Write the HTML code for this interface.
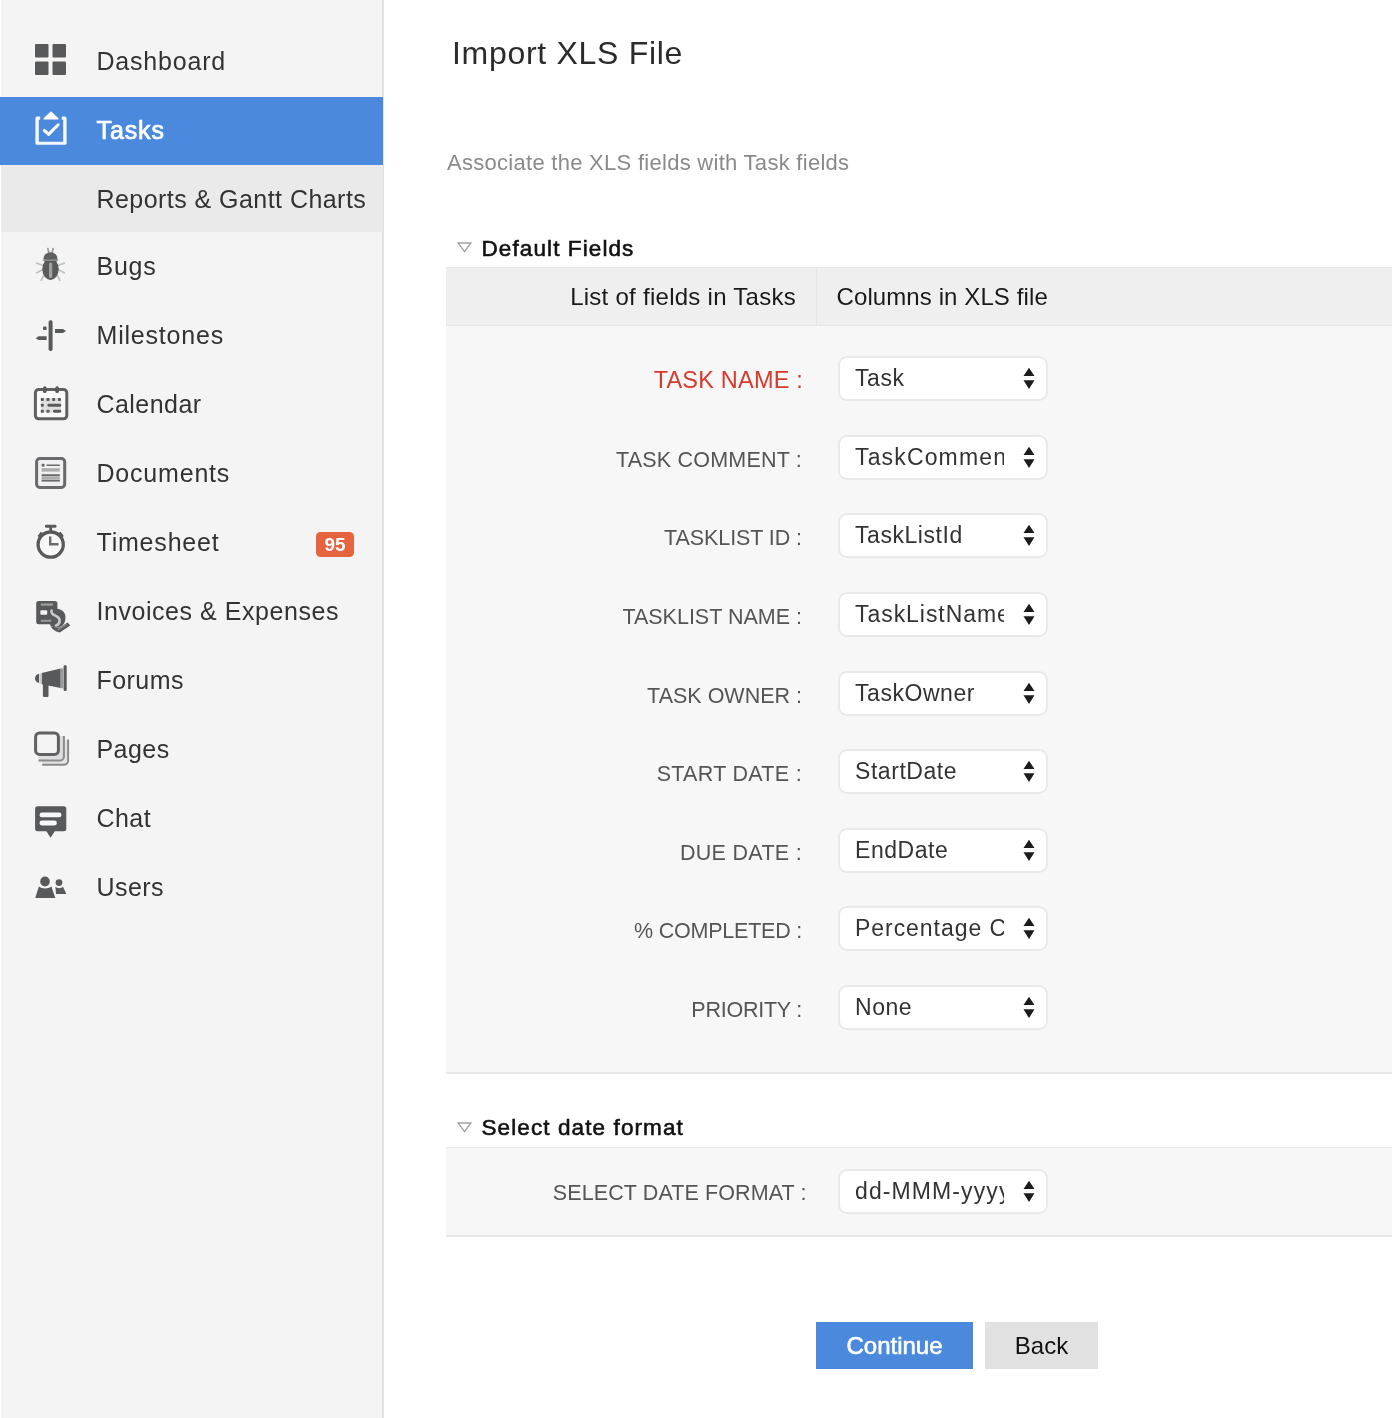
<!DOCTYPE html>
<html lang="en">
<head>
<meta charset="utf-8">
<title>Import XLS File</title>
<style>
*{box-sizing:border-box;margin:0;padding:0}
html,body{width:1392px;height:1418px;overflow:hidden;background:#fff}
body{position:relative;will-change:transform;font-family:"Liberation Sans",Arial,sans-serif;color:#333;-webkit-font-smoothing:antialiased}
.abs{position:absolute}
/* ---------- sidebar ---------- */
#side{position:absolute;left:0;top:0;width:384px;height:1418px;background:#f4f4f4;border-right:2px solid #e2e2e2;border-left:1px solid #fff}
.nav{position:absolute;left:0;width:382px;height:69px}
.nav .lbl{position:absolute;left:95.5px;top:0;height:69px;line-height:69px;font-size:25px;color:#333;white-space:nowrap;letter-spacing:.45px}
.nav svg{position:absolute}
#n-tasks{background:#4a89dc;left:-1px;width:383px}
#n-tasks .lbl{color:#fff;left:96.5px;-webkit-text-stroke:.7px #fff;letter-spacing:.9px}
#n-rep{background:#eaeaea}
.badge{position:absolute;left:315px;top:24px;width:38px;height:24.5px;border-radius:4.5px;background:#e5633f;color:#fff;font-size:19px;font-weight:bold;line-height:25px;text-align:center}
/* ---------- main ---------- */
#title{position:absolute;left:452px;top:30px;font-size:32px;line-height:46px;color:#2b2b2b;letter-spacing:.7px;white-space:nowrap}
#sub{position:absolute;left:447px;top:148.5px;font-size:22px;line-height:28px;color:#8a8a8a;letter-spacing:.28px;white-space:nowrap}
.sec{position:absolute;left:481.5px;margin-top:1.5px;font-size:22.5px;line-height:30px;color:#111;-webkit-text-stroke:.6px #111;white-space:nowrap;letter-spacing:1.1px}
.tri{position:absolute;left:457px}
#thead{position:absolute;left:446px;top:267px;width:946px;height:59px;background:#efefef;border-top:1px solid #e9e9e9;border-bottom:1px solid #e6e6e6}
#thead .c1{position:absolute;left:0;top:-1px;width:371px;height:58px;border-right:1px solid #e6e6e6;text-align:right;padding-right:20px;line-height:60px;font-size:24px;letter-spacing:.27px;color:#1a1a1a;white-space:nowrap}
#thead .c2{position:absolute;left:390.5px;top:-1px;height:58px;line-height:60px;font-size:24px;letter-spacing:.1px;color:#1a1a1a;white-space:nowrap}
#tbody{position:absolute;left:446px;top:326px;width:946px;height:748px;background:#f7f7f7;border-bottom:2px solid #e8e8e8}
#dbox{position:absolute;left:446px;top:1147px;width:946px;height:90px;background:#f7f7f7;border-top:1px solid #e8e8e8;border-bottom:2px solid #e8e8e8}
.flbl{position:absolute;right:590px;width:400px;text-align:right;font-size:21.5px;line-height:30px;color:#555;white-space:nowrap;letter-spacing:.2px;margin-top:1.5px}
.flbl.req{color:#d63a2c;font-size:23.5px;right:589px;margin-top:1px}
.sel{position:absolute;left:838px;width:209.5px;height:44.5px;background:#fff;border:2px solid #e9e9e9;border-radius:9px;overflow:hidden}
.sel span{position:absolute;left:15px;top:0;width:149px;overflow:hidden;white-space:nowrap;line-height:40px;font-size:23px;color:#333;letter-spacing:.55px}
.sel svg{position:absolute;left:183px;top:9px}
.btn{position:absolute;top:1322px;height:47px;line-height:47px;text-align:center;font-size:24px;white-space:nowrap}
#b1{left:816px;width:157px;background:#4a89dc;color:#fff;-webkit-text-stroke:.6px #fff}
#b2{left:985px;width:113px;background:#e1e1e1;color:#111}
</style>
</head>
<body>
<div id="side">
  <div class="nav" id="n-dash" style="top:27px"><span class="lbl" style="letter-spacing:0.8px">Dashboard</span></div>
  <div class="nav" id="n-tasks" style="top:97px;height:68px"><span class="lbl" style="line-height:67px">Tasks</span></div>
  <div class="nav" id="n-rep" style="top:165px;height:67px"><span class="lbl" style="line-height:68px">Reports &amp; Gantt Charts</span></div>
  <div class="nav" style="top:232px"><span class="lbl" style="letter-spacing:0.75px">Bugs</span></div>
  <div class="nav" style="top:301px"><span class="lbl" style="letter-spacing:0.8px">Milestones</span></div>
  <div class="nav" style="top:370px"><span class="lbl">Calendar</span></div>
  <div class="nav" style="top:439px"><span class="lbl" style="letter-spacing:0.8px">Documents</span></div>
  <div class="nav" style="top:508px"><span class="lbl" style="letter-spacing:0.8px">Timesheet</span><span class="badge">95</span></div>
  <div class="nav" style="top:577px"><span class="lbl" style="letter-spacing:0.55px">Invoices &amp; Expenses</span></div>
  <div class="nav" style="top:646px"><span class="lbl">Forums</span></div>
  <div class="nav" style="top:715px"><span class="lbl">Pages</span></div>
  <div class="nav" style="top:784px"><span class="lbl">Chat</span></div>
  <div class="nav" style="top:853px"><span class="lbl">Users</span></div>
</div>
<svg id="icons" style="position:absolute;left:0;top:0" width="90" height="920" viewBox="0 0 90 920">
<!-- dashboard -->
<g fill="#58595b"><rect x="35" y="44" width="13.5" height="13.5" rx="1"/><rect x="52.5" y="44" width="13.5" height="13.5" rx="1"/><rect x="35" y="61.5" width="13.5" height="13.5" rx="1"/><rect x="52.5" y="61.5" width="13.5" height="13.5" rx="1"/></g>
<!-- tasks -->
<path d="M35.4 118.4a1.8 1.8 0 0 1 1.8 -1.8h3v3.2h-1.4V141.7H63.2V119.8h-1.4v-3.2h3a1.8 1.8 0 0 1 1.8 1.8V143.2a1.6 1.6 0 0 1 -1.6 1.6H37a1.6 1.6 0 0 1 -1.6 -1.6Z" fill="#fff" fill-opacity=".94"/>
<path d="M44.3 130.4L48.6 134.4L58.2 124.8" fill="none" stroke="#fff" stroke-width="3" stroke-linecap="round" stroke-linejoin="round"/>
<path d="M44.2 118.8L51 112.2L57.8 118.8Z" fill="#fff" stroke="#fff" stroke-width="1.6" stroke-linejoin="round"/>
<!-- bugs -->
<g stroke="#c2c2c2" stroke-width="1.8" stroke-linecap="round" fill="none"><path d="M36.8 263.2L43 265.5M36.8 272.8L43 269.5M41.2 280.2L44 275M64.2 263.2L58 265.5M64.2 272.8L58 269.5M59.8 280.2L57 275"/><path d="M47.8 248.6L49.3 254M53.2 248.6L51.7 254" stroke="#9c9c9c"/></g>
<ellipse cx="50.5" cy="258.2" rx="6.9" ry="6" fill="#5f6062"/>
<ellipse cx="50.5" cy="269.2" rx="8.2" ry="10.8" fill="#58595b"/>
<rect x="42.8" y="259.4" width="15.4" height="1.5" fill="#909090"/>
<rect x="49" y="262.5" width="3.2" height="15.5" rx="1.5" fill="#a0a0a0"/>
<!-- milestones -->
<g fill="#58595b"><rect x="48.6" y="320.3" width="4" height="30.8" rx="1.8"/><path d="M55 329.1h8l3 1.9l-3 1.9h-8z"/><path d="M46.6 336.3h-8l-3 1.9l3 1.9h8z"/><rect x="43" y="326.6" width="3.6" height="3.4" rx="1"/></g>
<!-- calendar -->
<rect x="35.4" y="389.6" width="31.4" height="29.2" rx="3.2" fill="#fafafa" stroke="#5f6062" stroke-width="3"/><rect x="40.8" y="398" width="20.4" height="14.7" fill="#dedede"/>
<g fill="#58595b"><rect x="43" y="386.3" width="3.6" height="6.8" rx="1.7"/><rect x="55.3" y="386.3" width="3.6" height="6.8" rx="1.7"/>
<rect x="40.8" y="398" width="3" height="3" rx=".8"/><rect x="46.5" y="398" width="3" height="3" rx=".8"/><rect x="52.2" y="398" width="3" height="3" rx=".8"/><rect x="57.9" y="398" width="3" height="3" rx=".8"/>
<rect x="40.8" y="403.8" width="3" height="3" rx=".8"/><rect x="47.4" y="403.8" width="13.8" height="3" rx="1.4"/>
<rect x="40.8" y="409.7" width="3" height="3" rx=".8"/><rect x="46.5" y="409.7" width="3" height="3" rx=".8"/><rect x="53" y="409.7" width="8.2" height="3" rx="1.4"/></g>
<!-- documents -->
<rect x="36.6" y="458.5" width="28.1" height="28.9" rx="3.2" fill="#f0f0f0" stroke="#696a6d" stroke-width="3"/>
<g fill="#6a6b6d"><rect x="41.6" y="463.8" width="3" height="3" rx="1.2"/><rect x="46.5" y="464.5" width="13.3" height="1.5"/><rect x="41.6" y="474.2" width="18.2" height="1.9"/><rect x="41.6" y="479.7" width="18.2" height="1.9"/></g>
<g fill="#adadad"><rect x="41.6" y="468.2" width="18.2" height="3.4"/><rect x="41.6" y="476.3" width="18.2" height="3.2"/></g>
<!-- timesheet -->
<circle cx="50.7" cy="544.6" r="12.6" fill="#f8f8f8" stroke="#58595b" stroke-width="3.3"/>
<g fill="#58595b"><rect x="45" y="524.7" width="11.5" height="3" rx="1.3"/><rect x="49.3" y="526.5" width="2.8" height="5"/><path d="M37.6 536l3.2-4.2l3.3 2.3l-3.6 4.4zM63.8 536l-3.2-4.2l-3.3 2.3l3.6 4.4z"/></g>
<path d="M50.2 536.5V544.3H58.5" fill="none" stroke="#6a6b6d" stroke-width="2.4" stroke-linejoin="miter"/>
<!-- invoices -->
<rect x="36.2" y="601" width="21.2" height="23.2" rx="2.5" fill="#58595b"/>
<rect x="40.8" y="603.4" width="12.2" height="2.3" fill="#9c9c9c"/><rect x="40.4" y="610.2" width="6.8" height="4.6" rx="1" fill="#f4f4f4"/><rect x="40.8" y="619.8" width="11.5" height="2" fill="#9c9c9c"/>
<path d="M53 608.8C58.5 607.6 65.2 610.8 65.4 616.2C65.6 621.4 64.4 625.4 59.4 627C55.4 628.2 51.4 627 49.8 624.6L54 614Z" fill="#58595b"/>
<path d="M51.6 610.6C50.6 613.8 53.6 614.9 56.4 616.2C61 618.4 60.6 624.2 56 625.4" fill="none" stroke="#c8c8c8" stroke-width="2.6" stroke-linecap="round"/>
<path d="M50 625.6C52 629.6 56 631.8 59.8 632.6L70.2 625.4L67.6 622.6L60.2 627.2C57 628 53.6 627.6 50 625.6Z" fill="#58595b"/>
<path d="M57.6 630L66.6 624.2" fill="none" stroke="#8e8e8e" stroke-width="1.3"/>
<!-- forums -->
<g fill="#58595b"><path d="M39 673.8C36.2 674.6 35 676.4 35 678.4S36.2 682.2 39 683Z"/><path d="M41.7 672.9L60.7 668.6V688.1L41.7 684.2Z"/><rect x="42.9" y="683" width="5.6" height="14" rx="1.2"/><rect x="63.6" y="665.2" width="3.1" height="25.8" rx="1.3"/></g>
<rect x="60.7" y="668.4" width="2.9" height="19.9" fill="#9d9d9d"/><rect x="39.4" y="673.6" width="2.3" height="9.8" fill="#c9c9c9"/>
<!-- pages -->
<path d="M68.1 739.5V760.5a4.2 4.2 0 0 1 -4.2 4.2H42.2V739.5Z" fill="#e3e3e3" stroke="none"/><path d="M68.1 739.5V760.5a4.2 4.2 0 0 1 -4.2 4.2H42.2" fill="none" stroke="#8a8b8d" stroke-width="2"/>
<path d="M63.9 736V756.4a4.2 4.2 0 0 1 -4.2 4.2H38.5V736Z" fill="#dedede" stroke="none"/><path d="M63.9 736V756.4a4.2 4.2 0 0 1 -4.2 4.2H38.5" fill="none" stroke="#8a8b8d" stroke-width="2"/>
<rect x="35.6" y="733" width="22.8" height="21.4" rx="4" fill="#f4f4f4" stroke="#5f6062" stroke-width="3"/>
<!-- chat -->
<path d="M37.6 806.2H63.8a2.5 2.5 0 0 1 2.5 2.5V828.7a2.5 2.5 0 0 1 -2.5 2.5H54.8L50.5 837.8L46.4 831.2H37.6a2.5 2.5 0 0 1 -2.5 -2.5V808.7a2.5 2.5 0 0 1 2.5 -2.5Z" fill="#58595b"/>
<rect x="39.5" y="812.5" width="22" height="4.8" rx="2.4" fill="#f8f8f8"/><rect x="39.5" y="820.6" width="17.4" height="4.8" rx="2.4" fill="#f8f8f8"/>
<!-- users -->
<g fill="#58595b"><ellipse cx="45" cy="881.5" rx="4.8" ry="5"/><path d="M38.9 886.6C42 889.2 48.2 889.2 51.4 886.6L55.3 897.9H35.2Z"/><circle cx="59" cy="882.6" r="3.4"/><path d="M55.4 886.8C57 888.6 61.4 888.6 63 886.8L66.3 893.9H56Z"/></g>
</svg>

<div id="title">Import XLS File</div>
<div id="sub">Associate the XLS fields with Task fields</div>

<svg class="tri" style="top:242px" width="15" height="11" viewBox="0 0 15 11"><path d="M1.2 1h12.6L7.5 9.6z" fill="#fff" stroke="#a2a2a2" stroke-width="1.3"/></svg>
<div class="sec" style="top:232px">Default Fields</div>
<div id="thead"><div class="c1">List of fields in Tasks</div><div class="c2">Columns in XLS file</div></div>
<div id="tbody"></div>

<svg class="tri" style="top:1122.3px" width="15" height="11" viewBox="0 0 15 11"><path d="M1.2 1h12.6L7.5 9.6z" fill="#fff" stroke="#a2a2a2" stroke-width="1.3"/></svg>
<div class="sec" style="top:1111px">Select date format</div>
<div id="dbox"></div>

<div class="flbl req" style="top:364px">TASK NAME :</div>
<div class="sel" style="top:356px"><span>Task</span><svg width="12" height="23" viewBox="0 0 12 23"><path d="M6 0.7L11.5 9.1H0.5z M6 22.1L11.5 13.3H0.5z" fill="#1c1c1c"/></svg></div>
<div class="flbl" style="top:443px">TASK COMMENT :</div>
<div class="sel" style="top:435px"><span style="letter-spacing:1.15px">TaskComment</span><svg width="12" height="23" viewBox="0 0 12 23"><path d="M6 0.7L11.5 9.1H0.5z M6 22.1L11.5 13.3H0.5z" fill="#1c1c1c"/></svg></div>
<div class="flbl" style="top:521px;letter-spacing:-0.08px">TASKLIST ID :</div>
<div class="sel" style="top:513px"><span>TaskListId</span><svg width="12" height="23" viewBox="0 0 12 23"><path d="M6 0.7L11.5 9.1H0.5z M6 22.1L11.5 13.3H0.5z" fill="#1c1c1c"/></svg></div>
<div class="flbl" style="top:600px;letter-spacing:0px">TASKLIST NAME :</div>
<div class="sel" style="top:592px"><span style="letter-spacing:.95px">TaskListName</span><svg width="12" height="23" viewBox="0 0 12 23"><path d="M6 0.7L11.5 9.1H0.5z M6 22.1L11.5 13.3H0.5z" fill="#1c1c1c"/></svg></div>
<div class="flbl" style="top:679px;letter-spacing:0px">TASK OWNER :</div>
<div class="sel" style="top:671px"><span>TaskOwner</span><svg width="12" height="23" viewBox="0 0 12 23"><path d="M6 0.7L11.5 9.1H0.5z M6 22.1L11.5 13.3H0.5z" fill="#1c1c1c"/></svg></div>
<div class="flbl" style="top:757px;letter-spacing:0.3px">START DATE :</div>
<div class="sel" style="top:749px"><span>StartDate</span><svg width="12" height="23" viewBox="0 0 12 23"><path d="M6 0.7L11.5 9.1H0.5z M6 22.1L11.5 13.3H0.5z" fill="#1c1c1c"/></svg></div>
<div class="flbl" style="top:836px;letter-spacing:0.3px">DUE DATE :</div>
<div class="sel" style="top:828px"><span>EndDate</span><svg width="12" height="23" viewBox="0 0 12 23"><path d="M6 0.7L11.5 9.1H0.5z M6 22.1L11.5 13.3H0.5z" fill="#1c1c1c"/></svg></div>
<div class="flbl" style="top:914px;letter-spacing:-0.22px">% COMPLETED :</div>
<div class="sel" style="top:906px"><span style="letter-spacing:.95px">Percentage Completed</span><svg width="12" height="23" viewBox="0 0 12 23"><path d="M6 0.7L11.5 9.1H0.5z M6 22.1L11.5 13.3H0.5z" fill="#1c1c1c"/></svg></div>
<div class="flbl" style="top:993px;letter-spacing:-0.24px">PRIORITY :</div>
<div class="sel" style="top:985px"><span>None</span><svg width="12" height="23" viewBox="0 0 12 23"><path d="M6 0.7L11.5 9.1H0.5z M6 22.1L11.5 13.3H0.5z" fill="#1c1c1c"/></svg></div>
<div class="flbl" style="top:1176px;right:585.5px;letter-spacing:.1px">SELECT DATE FORMAT :</div>
<div class="sel" style="top:1169px"><span style="letter-spacing:1.1px">dd-MMM-yyyy</span><svg width="12" height="23" viewBox="0 0 12 23"><path d="M6 0.7L11.5 9.1H0.5z M6 22.1L11.5 13.3H0.5z" fill="#1c1c1c"/></svg></div>

<div class="btn" id="b1">Continue</div>
<div class="btn" id="b2">Back</div>
</body>
</html>
